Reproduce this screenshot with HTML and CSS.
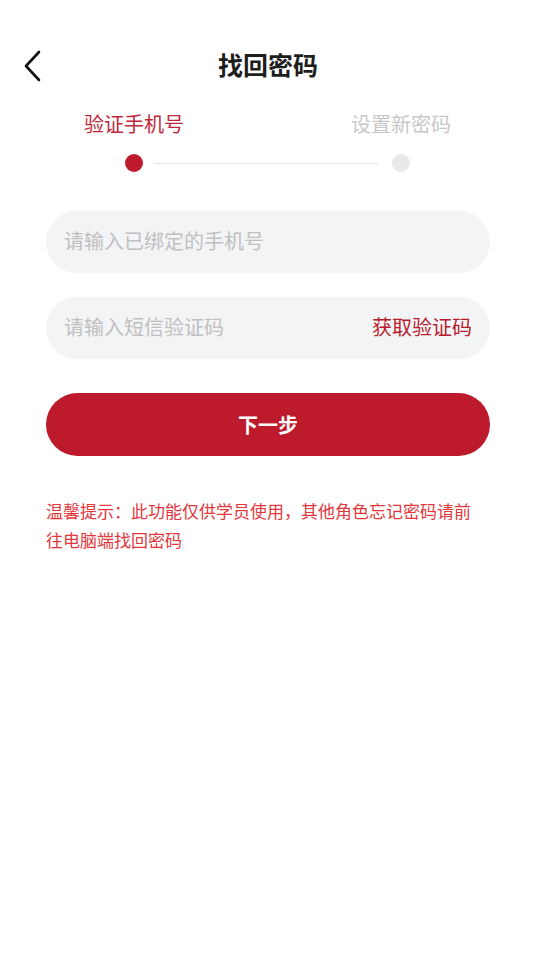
FILE: index.html
```html
<!DOCTYPE html>
<html lang="zh-CN">
<head>
<meta charset="UTF-8">
<meta name="viewport" content="width=device-width, initial-scale=1.0">
<title>找回密码</title>
<link rel="stylesheet" href="styles.css">
</head>
<body>

<header class="topbar">
  <a class="back" href="#">
    <svg width="20" height="32" viewBox="0 0 20 32"><path d="M16 2 L3 16 L16 30" fill="none" stroke="#111" stroke-width="2.6" stroke-linecap="round" stroke-linejoin="round"/></svg>
  </a>
  <h1>找回密码</h1>
  <span></span>
</header>

<div class="steps">
  <span class="step active">验证手机号</span>
  <span class="step">设置新密码</span>
</div>
<div class="progress">
  <span class="dot active"></span>
  <span class="line"></span>
  <span class="dot"></span>
</div>

<div class="form">
  <div class="field">
    <input type="text" placeholder="请输入已绑定的手机号">
  </div>
  <div class="field">
    <input type="text" placeholder="请输入短信验证码">
    <a class="code" href="#">获取验证码</a>
  </div>
  <button class="next">下一步</button>
  <p class="tip">温馨提示：此功能仅供学员使用，其他角色忘记密码请前往电脑端找回密码</p>
</div>

</body>
</html>
```

FILE: styles.css
```css
/* page */
body {
  margin: 0;
  font-family: "Noto Sans CJK SC", "Noto Sans", sans-serif;
  background: #fff;
  color: #222;
}
.topbar {
  display: grid;
  grid-template-columns: 70px 1fr 70px;
  align-items: center;
  height: 46px;
  padding-top: 41px;
}
.back {
  display: flex;
  padding-left: 23px;
  margin-top: 3px;
}
.topbar h1 {
  margin: 0;
  text-align: center;
  font-size: 25px;
  font-weight: 700;
  color: #1e1e1e;
}
.steps {
  display: flex;
  justify-content: space-between;
  padding: 0 85px 0 84px;
  margin-top: 23px;
}
.step {
  font-size: 20px;
  line-height: 28px;
  color: #c8c8c8;
}
.step.active {
  color: #c1273a;
}
.progress {
  display: flex;
  align-items: center;
  padding: 0 126px 0 125px;
  margin-top: 16px;
}
.dot {
  width: 18px;
  height: 18px;
  border-radius: 50%;
  background: #e8e9eb;
}
.dot.active {
  background: #bf1a2d;
}
.line {
  flex: 1;
  height: 1px;
  background: #e6e6e6;
  margin: 0 13px 0 11px;
}
.form {
  padding: 0 46px;
  margin-top: 39px;
}
.field {
  display: flex;
  align-items: center;
  height: 62px;
  border-radius: 31px;
  background: #f3f4f6;
  padding: 0 18px;
  margin-bottom: 24px;
}
.field input {
  flex: 1;
  min-width: 0;
  padding: 0 0 3px;
  border: 0;
  outline: 0;
  background: transparent;
  font-family: inherit;
  font-size: 20px;
  color: #333;
}
.field input::placeholder {
  color: #c0c0c0;
}
.code {
  font-size: 20px;
  color: #b71c2e;
  text-decoration: none;
  padding-bottom: 3px;
}
.next {
  display: block;
  width: 100%;
  height: 63px;
  margin-top: 34px;
  border: 0;
  border-radius: 32px;
  background: #bd1a2c;
  color: #fff;
  font-family: inherit;
  font-size: 20px;
  font-weight: 700;
}
.tip {
  margin: 40px 0 0;
  padding-right: 14px;
  font-size: 17px;
  line-height: 29px;
  color: #e2383d;
}
```
